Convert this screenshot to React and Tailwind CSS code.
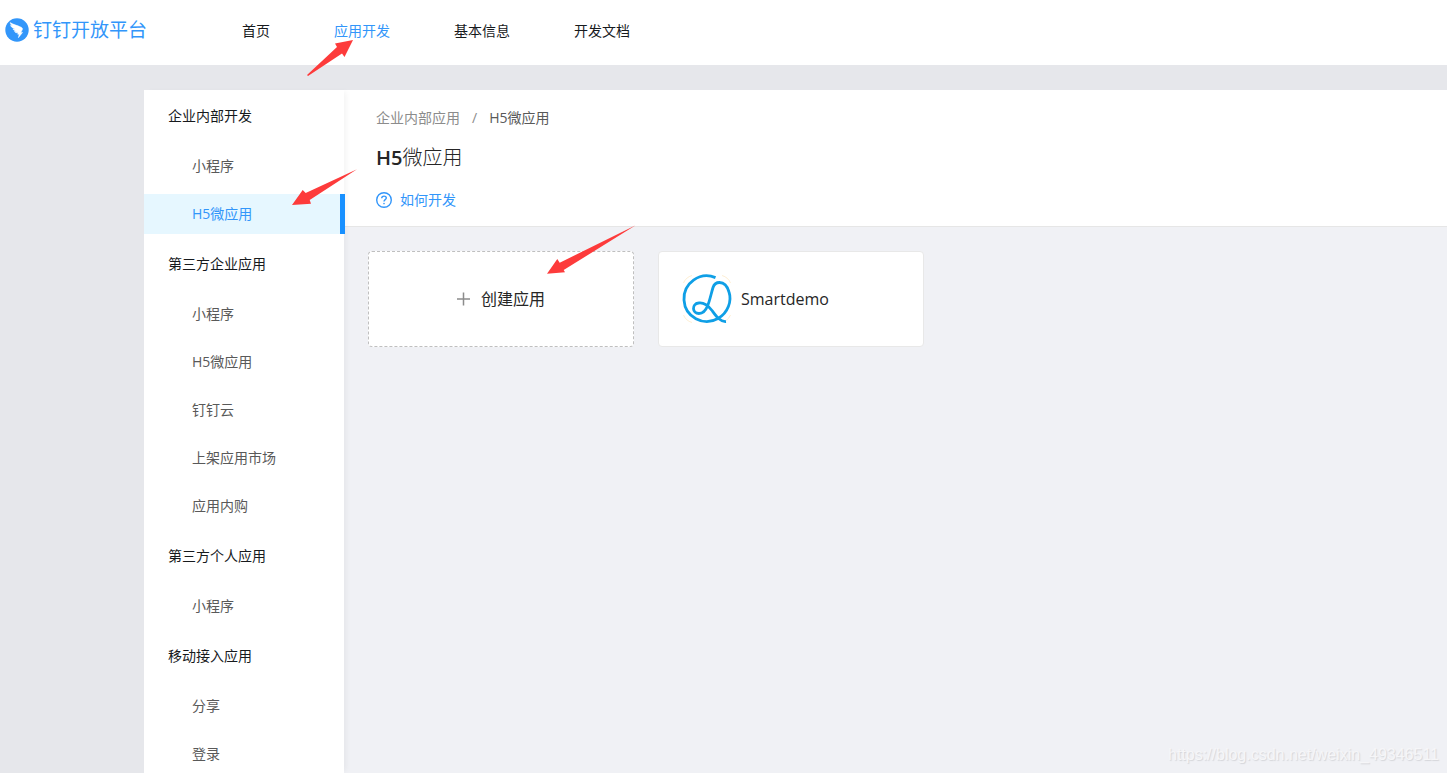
import clsx from 'clsx';

const navItems = [
  { label: '首页' },
  { label: '应用开发', active: true },
  { label: '基本信息' },
  { label: '开发文档' }
];

const menuGroups = [
  {
    title: '企业内部开发',
    items: [{ label: '小程序' }, { label: 'H5微应用', active: true }]
  },
  {
    title: '第三方企业应用',
    items: [
      { label: '小程序' },
      { label: 'H5微应用' },
      { label: '钉钉云' },
      { label: '上架应用市场' },
      { label: '应用内购' }
    ]
  },
  { title: '第三方个人应用', items: [{ label: '小程序' }] },
  { title: '移动接入应用', items: [{ label: '分享' }, { label: '登录' }] }
];

function BrandIcon() {
  return (
    <svg className="h-6 w-6 shrink-0" viewBox="0 0 24 24" aria-hidden="true">
      <circle cx="12" cy="12" r="11.7" fill="#3296fa" />
      <path
        d="M5.2 4.6c2.8 2 7 2.700 10.900 4.600 1.500.8 1.700 1.500 1.200 2.500l-1.500 2.700h1.800l-4.200 5.300.8-3.500h-1.600l.6-1.500c-2 .3-3-.2-3.700-1.200l2.400-.1c-2-.4-3.300-1-3.900-2.300l2.300.1C7.500 10.200 6 8.900 5.600 7.300l1.900.5C6.200 7 5.300 6 5.200 4.600z"
        fill="#fff"
        stroke="#fff"
        strokeWidth=".5"
      />
    </svg>
  );
}

function HelpIcon() {
  return (
    <svg className="h-4 w-4" viewBox="0 0 16 16" fill="none" stroke="currentColor" aria-hidden="true">
      <circle cx="8" cy="8" r="7.3" strokeWidth="1.4" />
      <path d="M5.700 6.300c0-1.300.9-2.200 2.300-2.200s2.300.8 2.300 2c0 1.600-2.300 1.600-2.300 3.400" strokeWidth="1.400" />
      <circle cx="8" cy="11.6" r=".8" fill="currentColor" stroke="none" />
    </svg>
  );
}

function AppLogo() {
  return (
    <svg className="h-12 w-12 overflow-visible" viewBox="0 0 48 48" fill="none" aria-hidden="true">
      <g stroke="#fbe3b5" strokeWidth=".6">
        <path d="M.5 8A13 13 0 0 1 9 .5M39 .5A13 13 0 0 1 47.5 8M.5 40A13 13 0 0 0 9 47.5M47.5 40a13 13 0 0 1-5 6" />
      </g>
      <path
        d="M32.500 2.600A22.800 22.800 0 1 0 35 43.500C45 38 49 26 46 17c-2-7-6-9.500-9.500-9.500S31 9.500 30 12.500C28 19 27 25 24.500 31c-2 5-5 7.500-8.500 7.500-7 0-7.500-9.500-.5-10.500 6-1 10 3 13.500 7.500C33 41 37 47 43 46.500"
        stroke="#0f9fe6"
        strokeWidth="2.8"
      />
    </svg>
  );
}

function Header() {
  return (
    <header className="flex h-[66px] shrink-0 items-center border-b border-[#e6e7eb] bg-white pb-1">
      <a href="#" className="flex w-[210px] items-center gap-1 pl-[5px] text-[19px] text-[#3296fa]">
        <BrandIcon />
        钉钉开放平台
      </a>
      <nav className="flex">
        {navItems.map((item) => (
          <a
            key={item.label}
            href="#"
            className={clsx('px-8', item.active ? 'text-[#3296fa]' : 'text-[#171a1d]')}
          >
            {item.label}
          </a>
        ))}
      </nav>
    </header>
  );
}

function Sidebar() {
  return (
    <aside className="z-10 w-[200px] shrink-0 bg-white pt-1.5 shadow-[4px_0_6px_-2px_rgba(0,0,0,0.05)]">
      {menuGroups.map((group) => (
        <section key={group.title} className="mb-2.5">
          <h2 className="mb-2.5 pl-6 leading-10 text-[#171a1d]">{group.title}</h2>
          <ul className="flex flex-col gap-2">
            {group.items.map((item) => (
              <li key={item.label}>
                <a
                  href="#"
                  className={clsx(
                    'block pl-12 leading-10',
                    item.active
                      ? '-mr-px border-r-[5px] border-[#1890ff] bg-[#e6f7ff] text-[#3296fa]'
                      : 'text-[#595959]'
                  )}
                >
                  {item.label}
                </a>
              </li>
            ))}
          </ul>
        </section>
      ))}
    </aside>
  );
}

function PageHeader() {
  return (
    <div className="border-b border-[#e6e6e6] bg-white px-8 pt-4 pb-3.5">
      <div className="flex gap-3 leading-6 text-[#8c8c8c]">
        <a href="#">企业内部应用</a>
        <span>/</span>
        <span className="text-[#595959]">H5微应用</span>
      </div>
      <h1 className="mt-3 text-xl leading-8 font-light text-[#262626]">
        <span className="font-semibold">H5</span>微应用
      </h1>
      <a href="#" className="mt-3.5 flex w-fit items-center gap-2 leading-6 text-[#3296fa]">
        <HelpIcon />
        如何开发
      </a>
    </div>
  );
}

function AppCards() {
  return (
    <div className="flex flex-wrap gap-6 p-6 text-base text-[#262626]">
      <button
        type="button"
        className="flex h-24 w-[266px] items-center justify-center gap-3 rounded-sm border border-dashed border-[#bfbfbf] bg-white"
      >
        <svg className="h-3 w-3 overflow-visible" viewBox="0 0 12 12" stroke="#8c8c8c" strokeWidth="1.5" aria-hidden="true">
          <path d="M6.500-.5v13M0 6h13" />
        </svg>
        创建应用
      </button>
      <a
        href="#"
        className="flex h-24 w-[266px] items-center gap-2.5 rounded-sm border border-[#e8e8e8] bg-white px-6 font-medium"
      >
        <AppLogo />
        Smartdemo
      </a>
    </div>
  );
}

// Red pointers for the three steps of the walkthrough
function StepArrows() {
  return (
    <svg className="pointer-events-none absolute top-0 left-0 z-20" width="700" height="300" fill="#fd3b3b" aria-hidden="true">
      <path d="M353 40l-18 3.500 2 3.500L307 75l1 1 34-22.500 2.500 3.500z" />
      <path d="M292 205l10.700-15 3 3L357 169.300 309.700 200l1.300 3.700z" />
      <path d="M547 273.700L557.300 259l2.400 3.700 76-37.400L563.700 270l1.300 2.300z" />
    </svg>
  );
}

export default function App() {
  return (
    <div className="relative flex h-screen flex-col overflow-hidden bg-[#e6e7eb] font-['Open_Sans','Noto_Sans_CJK_SC',sans-serif] text-sm">
      <Header />
      <div className="flex min-h-0 grow pt-6 pl-36">
        <Sidebar />
        <main className="grow bg-[#f0f1f5]">
          <PageHeader />
          <AppCards />
        </main>
      </div>
      <StepArrows />
      <div className="absolute right-2 bottom-2 font-['Liberation_Sans',sans-serif] text-base leading-5 text-[#f6f6f8] [text-shadow:1px_1px_1px_#d4d5d9]">
        https://blog.csdn.net/weixin_49346511
      </div>
    </div>
  );
}
